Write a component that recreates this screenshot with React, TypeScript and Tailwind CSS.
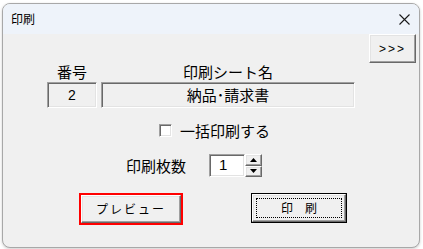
import React from "react"

const jp = "font-['Noto_Sans_CJK_JP','MS_UI_Gothic',sans-serif]"

const raised =
  "bg-[#f0f0f0] border border-t-white border-l-white border-r-[#696969] border-b-[#696969] shadow-[inset_-1px_-1px_0_#a0a0a0,inset_1px_1px_0_#e3e3e3]"

const sunken =
  "border border-t-[#a0a0a0] border-l-[#a0a0a0] border-r-white border-b-white shadow-[inset_1px_1px_0_#696969,inset_-1px_-1px_0_#e3e3e3]"

const SpinButton = ({ up }: { up?: boolean }) => (
  <div className={`${raised} flex h-[11.5px] w-[17px] items-center justify-center`}>
    <svg width="7" height="4" viewBox="0 0 7 4">
      {up ? <path d="M3.5 0 L7 4 L0 4 Z" fill="#000" /> : <path d="M0 0 L7 0 L3.5 4 Z" fill="#000" />}
    </svg>
  </div>
)

const PrintDialog = () => {
  return (
    <div className={`flex h-[245px] w-[418px] flex-col overflow-hidden rounded-[8px] border border-[#a8a8a8] bg-[#f0f0f0] shadow-[0_1px_3px_rgba(0,0,0,0.2)] ${jp} text-black`}>
      {/* title bar */}
      <div className="flex h-[30px] shrink-0 items-center justify-between bg-[#eef3fa] pl-[8px] pr-[9px]">
        <span className="text-[12px] leading-none">印刷</span>
        <svg width="11" height="11" viewBox="0 0 11 11">
          <path d="M0.5 0.5 L10.5 10.5 M10.5 0.5 L0.5 10.5" stroke="#1a1a1a" strokeWidth="1.1" />
        </svg>
      </div>

      <div className="flex flex-1 flex-col">
        <div className="flex justify-end pr-[3px]">
          <button className={`${raised} h-[29px] w-[47px] font-['Liberation_Sans',sans-serif] text-[12px] tracking-[2px] text-black`}>
            &gt;&gt;&gt;
          </button>
        </div>

        <div className="ml-[44px] grid grid-cols-[50px_254px] gap-x-[4px]">
          <div className="h-[17px] text-center text-[15px] leading-[17px]">番号</div>
          <div className="h-[17px] text-center text-[15px] leading-[17px]">印刷シート名</div>
          <div className={`${sunken} mt-[2px] flex h-[26px] items-center justify-center font-['Liberation_Sans',sans-serif] text-[14px]`}>2</div>
          <div className={`${sunken} mt-[2px] flex h-[26px] items-center justify-center text-[15px]`}>納品･請求書</div>
        </div>

        <div className="ml-[156px] mt-[16px] flex items-center">
          <div className={`${sunken} h-[13px] w-[13px] bg-white`} />
          <span className="ml-[8px] text-[15px] leading-[13px]">一括印刷する</span>
        </div>

        <div className="ml-[123px] mt-[17px] flex items-center">
          <span className="w-[83px] text-[15px] leading-[23px]">印刷枚数</span>
          <div className={`${sunken} flex h-[23px] w-[36px] items-center bg-white pl-[9px] font-['Liberation_Sans',sans-serif] text-[15px]`}>1</div>
          <div className="flex h-[23px] flex-col">
            <SpinButton up />
            <SpinButton />
          </div>
        </div>

        <div className="mt-[16px] flex items-start">
          <div className="ml-[76px] h-[32px] w-[104px] border-2 border-[#ff0000]">
            <button className={`${raised} h-full w-full text-[12px] tracking-[2px] text-black`}>プレビュー</button>
          </div>
          <div className="ml-[68px] h-[30px] w-[96px] border border-black">
            <div className={`${raised} flex h-full w-full items-center justify-center p-[3px]`}>
              <div className="flex h-full w-full items-center justify-center border border-dotted border-black text-[12px]">
                印　刷
              </div>
            </div>
          </div>
        </div>
      </div>
    </div>
  )
}

export default function App() {
  return (
    <div className="h-[249px] w-[423px] overflow-hidden bg-white pl-[2px] pt-[3px]">
      <PrintDialog />
    </div>
  )
}
